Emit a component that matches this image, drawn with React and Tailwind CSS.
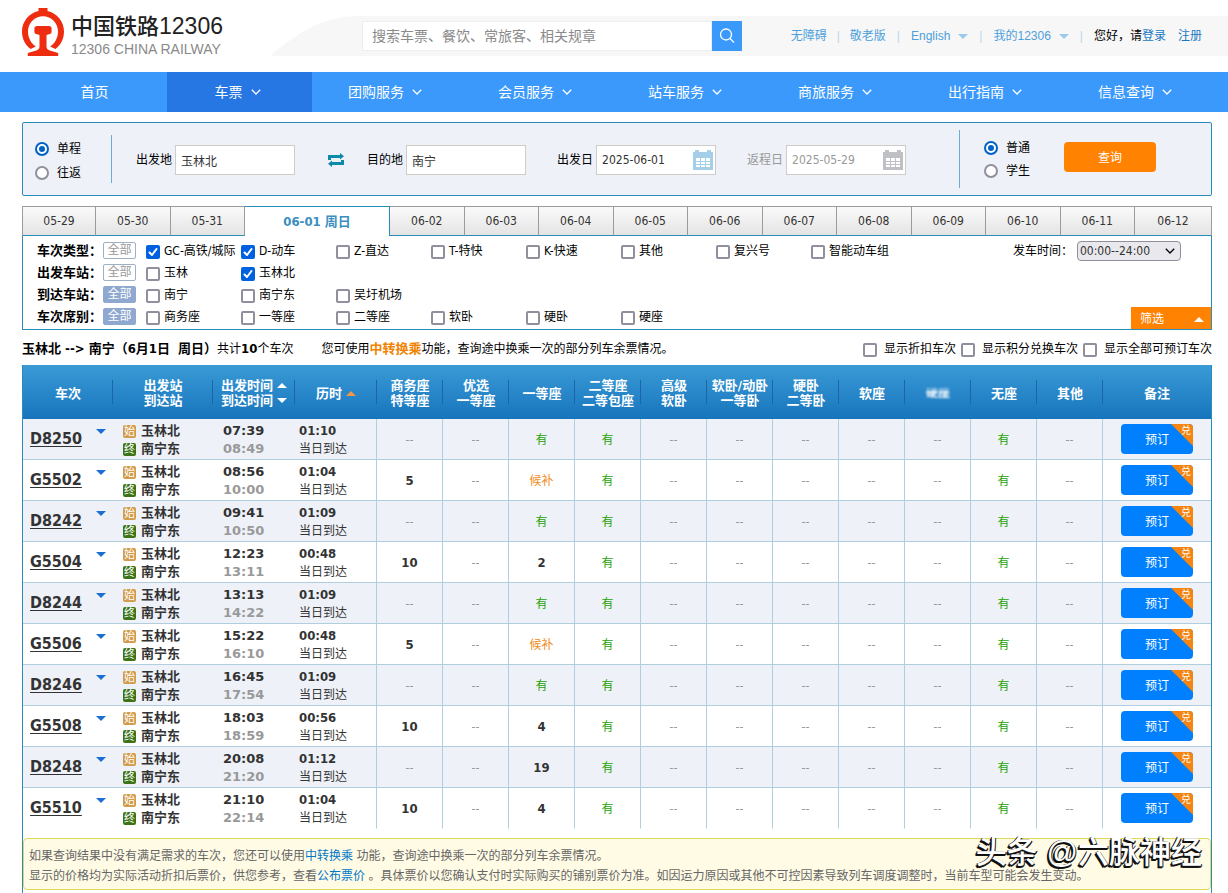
const navItems = ['团购服务', '会员服务', '站车服务', '商旅服务', '出行指南', '信息查询'];

const datesBefore = ['05-29', '05-30', '05-31'];
const datesAfter = ['06-02', '06-03', '06-04', '06-05', '06-06', '06-07', '06-08', '06-09', '06-10', '06-11', '06-12'];

const filters = [
  {
    label: '车次类型：',
    all: false,
    options: [
      ['GC-高铁/城际', true],
      ['D-动车', true],
      ['Z-直达', false],
      ['T-特快', false],
      ['K-快速', false],
      ['其他', false],
      ['复兴号', false],
      ['智能动车组', false],
    ],
  },
  { label: '出发车站：', all: false, options: [['玉林', false], ['玉林北', true]] },
  { label: '到达车站：', all: true, options: [['南宁', false], ['南宁东', false], ['吴圩机场', false]] },
  {
    label: '车次席别：',
    all: true,
    options: [['商务座', false], ['一等座', false], ['二等座', false], ['软卧', false], ['硬卧', false], ['硬座', false]],
  },
];

const seatHeads = [
  ['商务座', '特等座'],
  ['优选', '一等座'],
  ['一等座'],
  ['二等座', '二等包座'],
  ['高级', '软卧'],
  ['软卧/动卧', '一等卧'],
  ['硬卧', '二等卧'],
  ['软座'],
  ['硬座'],
  ['无座'],
  ['其他'],
];

const trains = [
  { no: 'D8250', start: '07:39', end: '08:49', cost: '01:10', business: '--', first: '有' },
  { no: 'G5502', start: '08:56', end: '10:00', cost: '01:04', business: '5', first: '候补' },
  { no: 'D8242', start: '09:41', end: '10:50', cost: '01:09', business: '--', first: '有' },
  { no: 'G5504', start: '12:23', end: '13:11', cost: '00:48', business: '10', first: '2' },
  { no: 'D8244', start: '13:13', end: '14:22', cost: '01:09', business: '--', first: '有' },
  { no: 'G5506', start: '15:22', end: '16:10', cost: '00:48', business: '5', first: '候补' },
  { no: 'D8246', start: '16:45', end: '17:54', cost: '01:09', business: '--', first: '有' },
  { no: 'G5508', start: '18:03', end: '18:59', cost: '00:56', business: '10', first: '4' },
  { no: 'D8248', start: '20:08', end: '21:20', cost: '01:12', business: '--', first: '19' },
  { no: 'G5510', start: '21:10', end: '22:14', cost: '01:04', business: '10', first: '4' },
];

function Logo() {
  return (
    <svg className="h-12 w-[42px] shrink-0" viewBox="0 0 42 48" aria-hidden="true">
      <path
        d="M16.500 0h9v3C35 5 42 13.500 42 23.500c0 7.800-3.600 13.800-8.600 17.600l-5.200-2.600C32.800 35.500 36 30 36 23.500 36 15 29.300 8.200 21 8.200S6 15 6 23.500c0 6.500 3.200 12 7.800 15l-5.200 2.600C3.600 37.300 0 31.300 0 23.500 0 13.500 7 5 16.500 3z"
        fill="#ee2c10"
      />
      <path
        d="M15 18h12c1.600 0 2.600 1 2.600 2.500v3.200c0 1.200-.7 2-1.800 2.300l-3.300 1v11c0 2.500 1 3.800 3.200 4.500l8.500 2.500V48H5.800v-3l8.500-2.500c2.200-.7 3.200-2 3.200-4.500V27l-3.300-1c-1.100-.3-1.800-1.100-1.800-2.300v-3.200C12.400 19 13.400 18 15 18z"
        fill="#ee2c10"
      />
    </svg>
  );
}

function Chevron() {
  return (
    <svg className="h-2 w-2.5" viewBox="0 0 10 8" fill="none" stroke="currentColor" strokeWidth="1.300" aria-hidden="true">
      <path d="M0.800 1.800L5 6l4.200-4.200" />
    </svg>
  );
}

function Triangle({ up = false, className }) {
  return (
    <svg className={`h-[5px] w-2.5 shrink-0 ${className}`} viewBox="0 0 10 5" fill="currentColor" aria-hidden="true">
      <path d={up ? 'M0 5h10L5 0z' : 'M0 0h10L5 5z'} />
    </svg>
  );
}

function CalendarIcon({ className }) {
  return (
    <svg className={`h-5 w-5 shrink-0 ${className}`} viewBox="0 0 20 20" aria-hidden="true">
      <path d="M0 2h2V0h4v2h8V0h4v2h2v18H0z" fill="currentColor" />
      <path
        d="M3 8h4v3H3zM8 8h4v3H8zM13 8h4v3h-4zM3 12h4v2H3zM8 12h4v2H8zM13 12h4v2h-4zM3 15h4v2H3zM8 15h4v2H8zM13 15h4v2h-4z"
        fill="#fff"
      />
    </svg>
  );
}

function Check({ label, checked = false, className = 'gap-1' }) {
  return (
    <label className={`flex items-center whitespace-nowrap ${className}`}>
      <span className="grid shrink-0 pt-0.5">
        <input
          type="checkbox"
          defaultChecked={checked}
          className="peer col-start-1 row-start-1 h-3.5 w-3.5 appearance-none rounded-xs border-2 border-[#8f8f9d] bg-white checked:border-[#0061e0] checked:bg-[#0061e0]"
        />
        <svg
          className="pointer-events-none invisible col-start-1 row-start-1 h-3.5 w-3.5 peer-checked:visible"
          viewBox="0 0 14 14"
          fill="none"
          stroke="#fff"
          strokeWidth="2"
          strokeLinecap="round"
          strokeLinejoin="round"
          aria-hidden="true"
        >
          <path d="M3.500 7.500L6 10l4.500-6" />
        </svg>
      </span>
      {label}
    </label>
  );
}

function Radio({ name, label, checked }) {
  return (
    <label className="flex items-center gap-2 whitespace-nowrap">
      <span className="grid shrink-0 place-items-center">
        <input
          type="radio"
          name={name}
          defaultChecked={checked}
          className="peer col-start-1 row-start-1 h-3.5 w-3.5 appearance-none rounded-full border-2 border-[#8f8f9d] bg-white checked:border-[#0061c8]"
        />
        <span className="pointer-events-none invisible col-start-1 row-start-1 h-1.5 w-1.5 rounded-full bg-[#0061c8] peer-checked:visible" />
      </span>
      {label}
    </label>
  );
}

function Field({ id, label, value, icon, disabled = false }) {
  return (
    <div className={`flex items-center gap-[3px] pt-0.5 ${disabled ? 'text-[#999]' : 'text-black'}`}>
      <label htmlFor={id} className="whitespace-nowrap">{label}</label>
      <div className="flex h-[30px] w-[120px] items-center border border-[#cfcdc7] bg-white pr-0.5">
        <input
          id={id}
          type="text"
          defaultValue={value}
          disabled={disabled}
          className={`h-full w-full min-w-0 bg-transparent pl-[5px] outline-none ${disabled ? 'text-[#999]' : 'text-[#333]'}`}
        />
        {icon}
      </div>
    </div>
  );
}

function Header() {
  return (
    <header className="flex h-[72px] py-4">
      <div className="-mt-2 flex h-12 w-[250px] shrink-0 items-center gap-[7px] pl-[22px]">
        <Logo />
        <div className="whitespace-nowrap pt-1 font-['Liberation_Sans','Noto_Sans_CJK_SC',sans-serif]">
          <div className="text-[22px] leading-7 text-[#222]">
            <span className="font-medium">中国铁路</span>
            <span className="text-[23px]">12306</span>
          </div>
          <div className="text-sm leading-4 text-[#8a8a8a]">12306 CHINA RAILWAY</div>
        </div>
      </div>
      <svg className="ml-[22px] h-10 w-[90px] shrink-0" viewBox="0 0 90 40" aria-hidden="true">
        <path d="M0 38C20 23 44 0 90 0v40H0z" fill="#f7f7f7" />
      </svg>
      <div className="flex h-10 flex-1 items-center justify-between bg-[#f7f7f7] pr-[26px]">
        <form className="flex h-[30px]">
          <input
            type="text"
            aria-label="搜索"
            placeholder="搜索车票、餐饮、常旅客、相关规章"
            className="w-[350px] border border-[#eee] bg-white px-[9px] text-sm outline-none placeholder:text-[#8a8a8a]"
          />
          <button type="button" aria-label="搜索" className="flex w-[30px] items-center justify-center bg-[#3b99fc] text-white">
            <svg className="h-4 w-4" viewBox="0 0 16 16" fill="none" stroke="currentColor" strokeWidth="1.300" aria-hidden="true">
              <circle cx="7" cy="6.500" r="5.500" />
              <path d="M11 10.500l4 4" />
            </svg>
          </button>
        </form>
        <div className="flex items-center whitespace-nowrap font-['Liberation_Sans','Noto_Sans_CJK_SC',sans-serif] text-[#4d9fdc]">
          <a href="#barrier">无障碍</a>
          <span className="mx-2.5 text-[#b5d6ee]">|</span>
          <a href="#elder">敬老版</a>
          <span className="mx-[11px] text-[#b5d6ee]">|</span>
          <a href="#english" className="flex items-center gap-2">English<Triangle className="text-[#9cc9ec]" /></a>
          <span className="mx-[11px] text-[#b5d6ee]">|</span>
          <a href="#my" className="flex items-center gap-2">我的12306<Triangle className="text-[#9cc9ec]" /></a>
          <span className="mx-[11px] text-[#b5d6ee]">|</span>
          <span className="text-black">您好，请</span>
          <a href="#login" className="text-[#1b78bf]">登录</a>
          <a href="#register" className="ml-3 text-[#1b78bf]">注册</a>
        </div>
      </div>
    </header>
  );
}

function Nav() {
  return (
    <nav className="flex h-10 bg-[#3b99fc] pl-[22px] pr-4 text-sm text-white">
      <a href="#home" className="flex grow-29 basis-0 items-center justify-center">首页</a>
      <a href="#ticket" className="flex grow-29 basis-0 items-center justify-center bg-[#2676e3]">
        <span className="flex items-center gap-2 pr-1">车票<Chevron /></span>
      </a>
      {navItems.map(item => (
        <a key={item} href="#service" className="flex grow-30 basis-0 items-center justify-center whitespace-nowrap">
          <span className="flex items-center gap-2 pr-1">{item}<Chevron /></span>
        </a>
      ))}
    </nav>
  );
}

function SearchPanel() {
  return (
    <form className="mt-2.5 flex h-[74px] items-center justify-between rounded-xs border border-[#298cba] bg-[#eef1f8] pl-3 pr-[55px]">
      <div className="flex items-center">
        <div className="flex h-12 w-[77px] flex-col justify-center gap-1 border-r border-[#6aaed6] pt-1 leading-5 text-black">
          <Radio name="trip" label="单程" checked />
          <Radio name="trip" label="往返" />
        </div>
        <div className="ml-6 flex items-center">
          <Field id="from" label="出发地" value="玉林北" />
          <button type="button" aria-label="交换" className="ml-8 mr-[22px] pt-0.5 text-[#0f8aa8]">
            <svg className="h-3.5 w-[18px]" viewBox="0 0 18 14" fill="currentColor" aria-hidden="true">
              <path d="M1 7V2h12V0l4 3.300-4 3.200V5H4v2zM17 7v5H5v2l-4-3.300 4-3.200V9h9V7z" />
            </svg>
          </button>
          <Field id="to" label="目的地" value="南宁" />
        </div>
        <div className="ml-[31px] flex items-center gap-[31px]">
          <Field id="depart" label="出发日" value="2025-06-01" icon={<CalendarIcon className="text-[#a5cfe8]" />} />
          <Field id="return" label="返程日" value="2025-05-29" disabled icon={<CalendarIcon className="text-[#bfbfc6]" />} />
        </div>
      </div>
      <div className="flex items-center">
        <div className="flex h-[58px] w-[105px] flex-col justify-center gap-[3px] border-l border-[#6aaed6] pl-6 leading-5 text-black">
          <Radio name="who" label="普通" checked />
          <Radio name="who" label="学生" />
        </div>
        <button type="button" className="mb-1 h-[30px] w-[92px] rounded bg-[#ff8201] pt-0.5 text-white">查询</button>
      </div>
    </form>
  );
}

function DateTab({ date, className = 'flex-1' }) {
  return (
    <li className={`border-y border-r border-t-[#9a9aa0] border-r-[#9a9aa0] border-b-[#298cba] bg-linear-to-b from-[#fafafa] to-[#e4e4e4] ${className}`}>
      <button type="button" className="h-full w-full text-[#333]">{date}</button>
    </li>
  );
}

function DateTabs() {
  return (
    <ul className="mt-2.5 flex h-[30px] border-l border-[#9a9aa0]">
      {datesBefore.map((date, i) => <DateTab key={date} date={date} className={i === 0 ? 'w-[73px]' : 'flex-1'} />)}
      <li className="w-[145px] border-r border-t border-[#298cba]">
        <button type="button" className="h-full w-full text-[13px] font-bold text-[#3a8fc0]">06-01 周日</button>
      </li>
      {datesAfter.map((date, i) => (
        <DateTab key={date} date={date} className={i === datesAfter.length - 1 ? 'w-[77px]' : 'flex-1'} />
      ))}
    </ul>
  );
}

function Filters() {
  return (
    <section className="flex justify-between border border-t-0 border-[#298cba] pl-3.5 text-black">
      <div className="pb-px pt-1">
        {filters.map(row => (
          <div key={row.label} className="flex h-[22px] items-center">
            <span className="w-[66px] whitespace-nowrap text-[13px] font-bold">{row.label}</span>
            <button
              type="button"
              className={`mb-0.5 mr-2.5 h-[17px] w-[33px] rounded-xs border leading-[15px] ${
                row.all ? 'border-[#8fa8cf] bg-[#8fa8cf] text-white' : 'border-[#9fb0c4] bg-white text-[#999]'
              }`}
            >
              全部
            </button>
            {row.options.map(([name, checked]) => (
              <Check key={name} label={name} checked={checked} className="w-[95px] gap-1" />
            ))}
          </div>
        ))}
      </div>
      <div className="flex flex-col items-end justify-between pt-[5px]">
        <div className="flex items-center pr-[30px]">
          <label htmlFor="time" className="mr-1 whitespace-nowrap">发车时间：</label>
          <div className="grid items-center">
            <select
              id="time"
              className="col-start-1 row-start-1 h-5 w-[104px] appearance-none rounded border border-[#8f8f9d] bg-[#e9e9ed] pl-0.5 leading-4 text-[#333]"
            >
              <option>00:00--24:00</option>
            </select>
            <span className="pointer-events-none col-start-1 row-start-1 mr-1.5 justify-self-end"><Chevron /></span>
          </div>
        </div>
        <button type="button" className="flex h-[22px] w-20 items-center justify-between bg-[#ff8201] pl-[9px] pr-[7px] pt-0.5 text-white">
          筛选
          <Triangle up />
        </button>
      </div>
    </section>
  );
}

function Summary() {
  return (
    <div className="flex h-[35px] items-center justify-between whitespace-nowrap pt-0.5 text-black">
      <p>
        <b className="whitespace-pre text-[13px]">玉林北 --&gt; 南宁（6月1日  周日）</b>
        共计<b className="text-[13px]">10</b>个车次
        <span className="ml-7">
          您可使用<a href="#transfer" className="text-[13px] font-bold text-[#f08300]">中转换乘</a>功能，查询途中换乘一次的部分列车余票情况。
        </span>
      </p>
      <div className="flex gap-[5px]">
        <Check label="显示折扣车次" className="gap-[7px]" />
        <Check label="显示积分兑换车次" className="gap-[7px]" />
        <Check label="显示全部可预订车次" className="gap-[7px]" />
      </div>
    </div>
  );
}

const headCell = 'bg-[linear-gradient(#1c66a8,#1c66a8)] bg-[length:1px_24px] bg-right bg-no-repeat p-0 pt-0.5 text-center';

function TicketHead() {
  return (
    <thead className="bg-linear-to-b from-[#3a9bd6] to-[#1674bd] text-[13px] leading-[15px] text-white">
      <tr className="h-[54px]">
        <th className={headCell}>车次</th>
        <th className={headCell}>出发站<br />到达站</th>
        <th className={headCell}>
          <div className="flex flex-col items-center">
            <span className="flex items-center gap-1">出发时间<Triangle up /></span>
            <span className="flex items-center gap-1">到达时间<Triangle /></span>
          </div>
        </th>
        <th className={headCell}>
          <div className="flex items-center justify-center gap-1">历时<Triangle up className="text-[#f0954a]" /></div>
        </th>
        {seatHeads.map(([top, bottom]) => (
          <th key={top + bottom} className={headCell}>
            {top === '硬座' ? (
              <div className="text-xs leading-[15px] blur-[1px] [mask-image:linear-gradient(transparent,black_40%)]">{top}</div>
            ) : (
              <span className="whitespace-nowrap">{top}</span>
            )}
            {bottom && <><br />{bottom}</>}
          </th>
        ))}
        <th className="p-0 pt-0.5 text-center">备注</th>
      </tr>
    </thead>
  );
}

function SeatCell({ value, last }) {
  let tone = 'text-[13px] font-bold text-[#333]';
  if (value === '--') tone = 'text-[#999]';
  if (value === '有') tone = 'text-[#26a306]';
  if (value === '候补') tone = 'text-[#f08c1a]';
  return (
    <td className={`border-b border-r border-r-[#b0cedd] p-0 pt-0.5 text-center ${last ? 'border-b-transparent' : 'border-b-[#b0cedd]'} ${tone}`}>
      {value}
    </td>
  );
}

function TrainRow({ train, last }) {
  const line = `border-b p-0 ${last ? 'border-b-transparent' : 'border-b-[#b0cedd]'}`;
  const seats = [train.business, '--', train.first, '有', '--', '--', '--', '--', '--', '有', '--'];

  return (
    <tr className="h-[41px] odd:bg-[#eef1f8]">
      <td className={line}>
        <div className="flex items-center justify-between pl-[7px] pr-[7px]">
          <a href="#train" className="text-base leading-5 font-bold text-[#333] underline underline-offset-2">{train.no}</a>
          <Triangle className="mb-4 text-[#1b6fd0]" />
        </div>
      </td>
      <td className={line}>
        <div className="flex flex-col pl-2.5 pt-0.5 text-[13px] font-bold leading-[18px] text-[#333]">
          <span className="flex items-center gap-[5px]">
            <i className="h-[13px] w-[13px] rounded-xs bg-[#d19b4a] text-center text-[11px] leading-[13px] font-normal not-italic text-white">始</i>
            玉林北
          </span>
          <span className="flex items-center gap-[5px]">
            <i className="h-[13px] w-[13px] rounded-xs bg-[#3c7317] text-center text-[11px] leading-[13px] font-normal not-italic text-white">终</i>
            南宁东
          </span>
        </div>
      </td>
      <td className={line}>
        <div className="pl-2.5 pt-0.5 font-['DejaVu_Sans',sans-serif] text-[13px] font-bold leading-[18px] text-[#333]">
          {train.start}
          <div className="text-[#999]">{train.end}</div>
        </div>
      </td>
      <td className={`${line} border-r border-r-[#b0cedd]`}>
        <div className="pl-1 pt-0.5 leading-[18px] text-[#333]">
          <b className="block text-[13px]">{train.cost}</b>
          当日到达
        </div>
      </td>
      {seats.map((value, i) => <SeatCell key={i} value={value} last={last} />)}
      <td className={line}>
        <button type="button" className="relative mx-auto block h-[30px] w-[72px] overflow-hidden rounded bg-[#0080ff] pt-0.5 text-white">
          预订
          <span className="absolute right-0 top-0 h-[22px] w-[22px] bg-[#f58410] pl-2.5 text-left text-[10px] leading-[14px] [clip-path:polygon(0_0,100%_0,100%_100%)]">
            兑
          </span>
        </button>
      </td>
    </tr>
  );
}

function TicketTable() {
  return (
    <table className="w-full table-fixed border-separate border-spacing-0">
      <colgroup>
        <col className="w-[90px]" />
        <col className="w-[100px]" />
        <col className="w-[82px]" />
        <col className="w-[82px]" />
        {seatHeads.map((_, i) => <col key={i} className="w-[66px]" />)}
        <col className="w-[108px]" />
      </colgroup>
      <TicketHead />
      <tbody>
        {trains.map((train, i) => (
          <TrainRow key={train.no} train={train} last={i === trains.length - 1} />
        ))}
      </tbody>
    </table>
  );
}

function Notice() {
  return (
    <div className="relative mt-[9px] rounded border border-[#dcd95c] bg-[#fffbe5] px-[5px] pb-[3px] pt-[7px] leading-5 text-[#666]">
      <p>
        如果查询结果中没有满足需求的车次，您还可以使用<a href="#transfer" className="text-[#0077c8]">中转换乘</a> 功能，查询途中换乘一次的部分列车余票情况。
      </p>
      <p>
        显示的价格均为实际活动折扣后票价，供您参考，查看<a href="#price" className="text-[#0077c8]">公布票价</a> 。具体票价以您确认支付时实际购买的铺别票价为准。如因运力原因或其他不可控因素导致列车调度调整时，当前车型可能会发生变动。
      </p>
      <div className="pointer-events-none absolute -top-2 right-2 whitespace-nowrap text-[31px] leading-[42px] font-medium text-white [text-shadow:-1px_1px_0_#111,-2px_2px_0_#111,1px_1px_0_#222,-1px_0_0_#222,0_2px_0_#111]">
        头条 <span className="font-['Liberation_Sans',sans-serif]">@</span>六脉神经
      </div>
    </div>
  );
}

export default function App() {
  return (
    <div className="bg-white font-['DejaVu_Sans_Condensed','Noto_Sans_CJK_SC',sans-serif] text-xs text-[#333]">
      <Header />
      <Nav />
      <main className="pl-[22px] pr-4">
        <SearchPanel />
        <DateTabs />
        <Filters />
        <Summary />
        <div className="border-x border-[#298cba] pb-[3px]">
          <TicketTable />
          <Notice />
        </div>
      </main>
    </div>
  );
}
